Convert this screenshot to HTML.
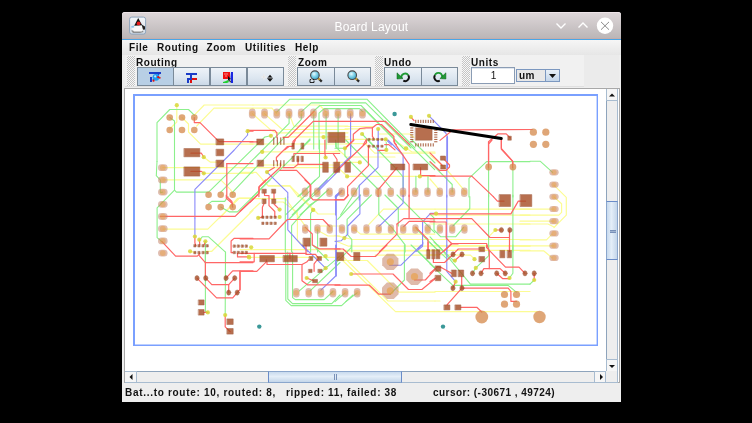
<!DOCTYPE html>
<html><head><meta charset="utf-8">
<style>
*{margin:0;padding:0;box-sizing:border-box}
html,body{width:752px;height:423px;overflow:hidden;background:#000}
body{position:relative;font-family:"Liberation Sans",sans-serif}
.a{position:absolute}
#win{left:122px;top:12px;width:499px;height:390px;background:#eeeeee;border-radius:3px 3px 0 0;will-change:transform}
#title{left:0;top:0;width:499px;height:27px;background:linear-gradient(#ddd6d8,#bab5b6);border-radius:3px 3px 0 0;border-top:1px solid #eee4e8}
#tline{left:0;top:26px;width:499px;height:2px;background:linear-gradient(#c2acac 0 50%,#4aa6e6 50%)}
.tt{color:#fff;font-size:12px;left:212.5px;top:7.5px;letter-spacing:0.2px}
.menu{font-weight:bold;font-size:10px;color:#111;top:30px;letter-spacing:0.55px}
.lbl{font-weight:bold;font-size:10px;color:#111;top:45px;letter-spacing:0.55px}
.grip{width:8px;height:30px;top:44px;background:repeating-conic-gradient(#c4c4c4 0 25%,#f8f8f8 0 50%) 0 0/2px 2px}
.btn{height:19px;top:55px;border:1px solid #7a8a99;background:linear-gradient(#eef3f8,#dce6f0 60%,#cbd9e7)}
.btn.sel{background:#b8cfe5}
.status{font-weight:bold;font-size:10px;color:#111;top:374.5px;letter-spacing:0.55px}
</style></head><body>
<div id="win" class="a">
  <div id="title" class="a"></div>
  <div id="tline" class="a"></div>
  <div class="a tt">Board Layout</div>
  <!-- app icon -->
  <svg class="a" style="left:7px;top:4px" width="18" height="19" viewBox="0 0 18 19">
    <defs><linearGradient id="ig" x1="0" y1="0" x2="0" y2="1"><stop offset="0" stop-color="#f4f7fa"/><stop offset="1" stop-color="#d4dde6"/></linearGradient></defs>
    <rect x="0.6" y="1.1" width="16" height="17" rx="2.2" fill="url(#ig)" stroke="#8ea4bc" stroke-width="1"/>
    <path d="M2 14.5 L13.5 14 L14.5 16 L11 17 L4 17 Z" fill="#7a7a7a" opacity="0.8"/>
    <path d="M4 9.5 L9.5 8.5 L14.5 9.5 L15 13.5 L12.5 15.5 L5 15.5 L3 13 Z" fill="#f8f8f8"/>
    <path d="M9.2 2 L5.2 9.8 L13.2 9.2 Z" fill="#151515"/>
    <path d="M12.5 8.5 L16 10.5 L16 13.5 L14 13.8 L13 10 Z" fill="#222"/>
    <circle cx="9.6" cy="7.4" r="1.9" fill="#e81818"/>
    <path d="M2.2 10.2 L5 9.5 L5.2 11.6 L2.6 11.8 Z" fill="#8cc4ec"/>
  </svg>
  <!-- title buttons -->
  <svg class="a" style="left:430px;top:3px" width="70" height="24" viewBox="0 0 70 24">
    <path d="M4.5 8.5 L9 13 L13.5 8.5" fill="none" stroke="#fff" stroke-width="1.4"/>
    <path d="M26.5 12.5 L31 8 L35.5 12.5" fill="none" stroke="#fff" stroke-width="1.4"/>
    <circle cx="53" cy="10.8" r="8.2" fill="#fff"/>
    <path d="M49 6.9 L57 14.7 M57 6.9 L49 14.7" stroke="#8a8a8a" stroke-width="1"/>
  </svg>

  <!-- menu -->
  <div class="a" style="left:0;top:28px;width:499px;height:15px;background:linear-gradient(#f6f6f6,#e6e6e6)"></div>
  <div class="a menu" style="left:7px">File</div>
  <div class="a menu" style="left:35px">Routing</div>
  <div class="a menu" style="left:84.5px">Zoom</div>
  <div class="a menu" style="left:123px">Utilities</div>
  <div class="a menu" style="left:173px">Help</div>
  <!-- toolbar -->
  <div class="a" style="left:3px;top:43px;width:459px;height:32px;background:#f1f1f1"></div>
  <div class="a" style="left:3px;top:74px;width:494px;height:1px;background:#e0e0e0"></div>
  <div class="a grip" style="left:5px"></div>
  <div class="a lbl" style="left:14px">Routing</div>
  <div class="a btn sel" style="left:15px;width:37px"></div>
  <div class="a btn" style="left:51px;width:37px"></div>
  <div class="a btn" style="left:88px;width:37px"></div>
  <div class="a btn" style="left:125px;width:37px"></div>
  <div class="a grip" style="left:166px"></div>
  <div class="a lbl" style="left:176px">Zoom</div>
  <div class="a btn" style="left:175px;width:38px"></div>
  <div class="a btn" style="left:212px;width:37px"></div>
  <div class="a grip" style="left:253px"></div>
  <div class="a lbl" style="left:262px">Undo</div>
  <div class="a btn" style="left:262px;width:38px"></div>
  <div class="a btn" style="left:299px;width:37px"></div>
  <div class="a grip" style="left:340px"></div>
  <svg class="a" style="left:15px;top:55px" width="450" height="20" viewBox="15 55 450 20">
    <!-- route btn (selected) -->
    <rect x="27" y="60" width="12" height="2" fill="#1a3cc8"/>
    <rect x="28" y="65" width="2" height="5" fill="#1a3cc8"/>
    <path d="M37 62 L31 68" stroke="#1a3cc8" stroke-width="1.6"/>
    <circle cx="34" cy="65.3" r="3.4" fill="#1c9cf0"/>
    <circle cx="33.2" cy="64.4" r="1.1" fill="#bfe6ff"/>
    <circle cx="36.2" cy="65.2" r="1.1" fill="#e01010"/><circle cx="37.8" cy="65.8" r="0.9" fill="#e01010"/><circle cx="31.5" cy="68.7" r="1.1" fill="#e01010"/>
    <!-- btn2 -->
    <rect x="64" y="61" width="11" height="2" fill="#1a3cc8"/>
    <rect x="68" y="61" width="2" height="6" fill="#1a3cc8"/>
    <rect x="65" y="66" width="5" height="2" fill="#1a3cc8"/>
    <rect x="65" y="66" width="2" height="5" fill="#1a3cc8"/>
    <rect x="70" y="66" width="5" height="2" fill="#e01010"/>
    <rect x="68" y="68" width="2" height="3" fill="#e01010"/>
    <!-- btn3 -->
    <rect x="101" y="60" width="7" height="7" fill="#f01010"/>
    <circle cx="103" cy="62" r="0.7" fill="#fbb"/><circle cx="105" cy="62" r="0.7" fill="#fbb"/><circle cx="104" cy="64" r="0.7" fill="#fbb"/>
    <path d="M109 60 L111 60 L111 71 L109 71 L108.5 65 Z" fill="#1a28e0"/>
    <path d="M101 70 L104 69 L106 68 L107 70 L105 71 L101 71 Z" fill="#20d030"/>
    <path d="M106 64 L109 67 L107.5 67.5 L109 70 L108 70.5 L107 68 L106 69 Z" fill="#111"/>
    <!-- btn4 -->
    <path d="M145.6 65.6 L148 62.8 L150.4 65.6 Z M145.6 67 L148 69.8 L150.4 67 Z" fill="#111"/>
    <rect x="145.2" y="65.8" width="5.6" height="1" fill="#333"/>
    <path d="M141.8 62 v5.5 M139.5 65 h5" stroke="#fafafa" stroke-width="1.3"/>
    <path d="M141.8 62 v5.5 M139.5 65 h5" stroke="#c8c8c8" stroke-width="0.4"/>
    <!-- zoom box -->
    <defs><radialGradient id="lens" cx="0.4" cy="0.35" r="0.7"><stop offset="0" stop-color="#e8fbff"/><stop offset="0.5" stop-color="#7ad0e8"/><stop offset="1" stop-color="#3aa0c0"/></radialGradient></defs>
    <line x1="197" y1="67" x2="199.8" y2="69.6" stroke="#2a2a2a" stroke-width="2.3"/>
    <line x1="196" y1="66" x2="197.8" y2="67.7" stroke="#c9a030" stroke-width="2"/>
    <circle cx="192.9" cy="63.2" r="4.3" fill="url(#lens)" stroke="#484848" stroke-width="1.1"/>
    <path d="M188 67.5 h1.2 M190.8 67.5 h1.2 M188 70.5 h4 M188 67.5 v3 M192 68.5 v2" stroke="#111" stroke-width="0.9"/>
    <line x1="234.3" y1="67" x2="237.1" y2="69.6" stroke="#2a2a2a" stroke-width="2.3"/>
    <line x1="233.3" y1="66" x2="235.1" y2="67.7" stroke="#c9a030" stroke-width="2"/>
    <circle cx="230.2" cy="63.2" r="4.3" fill="url(#lens)" stroke="#484848" stroke-width="1.1"/>
    <!-- undo -->
    <path d="M279.4 66.2 A3.8 3.8 0 0 1 286.3 63.3" fill="none" stroke="#1e9a34" stroke-width="1.9"/>
    <path d="M286.3 63.3 A3.8 3.8 0 0 1 281.3 68.7" fill="none" stroke="#111" stroke-width="1.9"/>
    <path d="M275 60.8 L275 67 L281 66.6 Z" fill="#1e9a34" stroke="#0c5a18" stroke-width="0.5"/>
    <!-- redo -->
    <path d="M320 66.2 A3.8 3.8 0 0 0 312.9 63.3" fill="none" stroke="#1e9a34" stroke-width="1.9"/>
    <path d="M312.9 63.3 A3.8 3.8 0 0 0 317.8 68.7" fill="none" stroke="#111" stroke-width="1.9"/>
    <path d="M323.9 60.8 L323.9 67 L317.9 66.6 Z" fill="#1e9a34" stroke="#0c5a18" stroke-width="0.5"/>
    <!-- combo arrow -->
    <path d="M427 62 L433 62 L430 65.5 Z" fill="#111"/>
  </svg>

  <div class="a lbl" style="left:349px">Units</div>
  <div class="a" style="left:462px;top:43px;width:35px;height:32px;background:#ebebeb"></div>
  <div class="a" style="left:349px;top:55px;width:44px;height:17px;background:#fff;border:1px solid #8a9cb4;box-shadow:inset 0 1px 0 #e0e6ee;font-size:10px;text-align:center;line-height:15px;color:#111;padding-left:1px">1</div>
  <div class="a" style="left:394px;top:57px;width:44px;height:13px;background:#e8e8e8;border:1px solid #7c98c0;font-size:10px;font-weight:bold;line-height:11px;padding-left:2px;letter-spacing:0.5px;color:#111">um</div>
  <div class="a" style="left:423px;top:57px;width:15px;height:13px;background:linear-gradient(#e8f0f8,#c4d6ea);border:1px solid #7c98c0"><svg width="13" height="11" style="position:absolute;left:0;top:0"><path d="M3 4 L10 4 L6.5 8 Z" fill="#111"/></svg></div>
  <!-- canvas -->
  <div class="a" style="left:2px;top:76px;width:496px;height:295px;border:1px solid #a8a8a8;background:#fff"></div>
  <!-- v scrollbar -->
  <div class="a" style="left:484px;top:77px;width:12px;height:282px;background:#eeeeee;border-left:1px solid #8ea4bc;border-right:1px solid #a8bcd0"></div>
  <div class="a" style="left:484px;top:77px;width:12px;height:12px;background:#f6f6f6;border:1px solid #a8bcd0;border-top:none"></div>
  <div class="a" style="left:484px;top:347px;width:12px;height:12px;background:#f6f6f6;border:1px solid #a8bcd0;border-bottom:none"></div>
  <svg class="a" style="left:484px;top:77px" width="12" height="282" viewBox="0 0 12 282">
    <path d="M3 7.5 L9 7.5 L6 4.5 Z" fill="#111"/>
    <path d="M3 286.5 L9 286.5 L6 289.5 Z" transform="translate(0,-10.5)" fill="#111"/>
  </svg>
  <div class="a" style="left:484px;top:189px;width:12px;height:59px;background:linear-gradient(to right,#c8daee,#e4eef8 45%,#c4d6ea);border:1px solid #8aa6cc;border-top-color:#6a8cc8;border-bottom-color:#6a8cc8"></div>
  <div class="a" style="left:487.5px;top:217.5px;width:6px;height:3px;border-top:1px solid #7890b8;border-bottom:1px solid #7890b8"></div>
  <div class="a" style="left:487.5px;top:219px;width:6px;height:1px;background:#a0b4d0"></div>
  <!-- h scrollbar -->
  <div class="a" style="left:3px;top:359px;width:481px;height:12px;background:#eeeeee;border-top:1px solid #8ea4bc;border-bottom:1px solid #a8bcd0"></div>
  <div class="a" style="left:3px;top:359px;width:12px;height:12px;background:#f6f6f6;border:1px solid #a8bcd0;border-left:none"></div>
  <div class="a" style="left:472px;top:359px;width:12px;height:12px;background:#f6f6f6;border:1px solid #a8bcd0"></div>
  <div class="a" style="left:483px;top:359px;width:13px;height:12px;background:#eeeeee;border:1px solid #a8bcd0;border-top:none"></div>
  <svg class="a" style="left:3px;top:359px" width="481" height="12" viewBox="0 0 481 12">
    <path d="M7.5 3 L7.5 9 L4.5 6 Z" fill="#111"/>
    <path d="M475 3 L475 9 L478 6 Z" fill="#111"/>
  </svg>
  <div class="a" style="left:146px;top:359px;width:134px;height:12px;background:linear-gradient(#c8daee,#e4eef8 45%,#c4d6ea);border:1px solid #8aa6cc;border-left-color:#6a8cc8;border-right-color:#6a8cc8"></div>
  <div class="a" style="left:211.5px;top:362px;width:3px;height:6px;border-left:1px solid #7890b8;border-right:1px solid #7890b8"></div>
  <div class="a status" style="left:3px;letter-spacing:0.7px">Bat...to route: 10, routed: 8,</div>
  <div class="a status" style="left:164px;letter-spacing:0.68px">ripped: 11, failed: 38</div>
  <div class="a status" style="left:311px;letter-spacing:0.45px">cursor: (-30671 , 49724)</div>
</div>
<!--PCB--><svg class="a" style="left:0;top:0" width="752" height="423" viewBox="0 0 752 423">
<defs><clipPath id="cv"><rect x="125" y="89" width="481" height="282"/></clipPath></defs>
<g clip-path="url(#cv)" fill="none" stroke-linejoin="round" stroke-linecap="round">
<path d="M134 346 V95 H598" stroke="#7aa0ff" stroke-width="2" fill="none" stroke-linecap="butt" stroke-linejoin="miter"/><path d="M597.3 94 V345.3 H133" stroke="#7aa0ff" stroke-width="1.4" fill="none" stroke-linecap="butt" stroke-linejoin="miter"/>
<g stroke="#fcfc94" stroke-width="1.2" opacity="1">
<polyline points="176.8,105.2 176.8,122 169.7,129"/>
<polyline points="182,117.5 188.5,124 188.5,132 200.6,144.2 253,144.2"/>
<polyline points="194.3,115.2 204.2,105 253,105"/>
<polyline points="196.7,126 214,108.2 253,108.2"/>
<polyline points="203.8,157.2 210.2,162.1 219.9,162.1"/>
<polyline points="162.8,167.7 253,167.7"/>
<polyline points="203.8,173.3 253,173.3"/>
<polyline points="162.8,179.8 220.7,179.8 231,190.2 232.7,194.7"/>
<polyline points="219.9,218 237.5,198.3 253,198.3"/>
<polyline points="252.3,113.6 270.7,129.9 276,133"/>
<polyline points="264.4,113.6 282.3,129.5 348,129.5"/>
<polyline points="289.1,113.6 293.9,126.2 348,126.2"/>
<polyline points="276.9,132.8 348,132.8"/>
<polyline points="283,136.9 348,136.9"/>
<polyline points="250,144 348,144"/>
<polyline points="253,105 319.5,105 326,112"/>
<polyline points="253,108.2 272,108.2 276.7,113.6"/>
<polyline points="345,126.5 372.4,126.5"/>
<polyline points="345,128.9 365,128.9"/>
<polyline points="379,134 409.7,134 413.8,137.3"/>
<polyline points="345,139.4 385.7,139.4"/>
<polyline points="262.2,151.9 339.7,151.9"/>
<polyline points="263.6,165 340,165"/>
<polyline points="240,167.6 340,167.6"/>
<polyline points="240,172.3 256.2,172.3 268.3,185.8 289.9,185.8 298,196.6"/>
<polyline points="345.8,143.7 366.5,143.7"/>
<polyline points="335,151.2 340,151.2 346.6,157 395,157"/>
<polyline points="365.6,144.1 374.7,153.2 435,153.2"/>
<polyline points="335,162.4 359.8,162.4"/>
<polyline points="338.3,168.1 345.8,174.8"/>
<polyline points="347.1,176.4 435,176.4"/>
<polyline points="400,144 412,152 435,152"/>
<polyline points="298,195 313.2,209.8"/>
<polyline points="430,154.8 447,170 465,191.2"/>
<polyline points="430,179 439.4,189.9"/>
<polyline points="162.8,229.1 207.8,229.1 239.2,198.2 253,198.2"/>
<polyline points="205,251.3 211.8,251.3 253,210.3"/>
<polyline points="190.1,251.3 194.9,252.6"/>
<polyline points="262.4,180 268.2,185.8 289.7,185.8 310,205.7 318,214 335,214"/>
<polyline points="250,198.6 285.6,198.6 304.8,225.3"/>
<polyline points="274.8,202 283.1,202 297.4,212.5 297.4,240 307,250"/>
<polyline points="250,212.3 260,203"/>
<polyline points="240,249.6 340,249.6"/>
<polyline points="316.4,229.8 328,236 340,236"/>
<polyline points="320,226 340,226"/>
<polyline points="368.7,224.6 383.5,209.2 435,209.2"/>
<polyline points="353.9,228.7 360.6,234.1 435,234.1"/>
<polyline points="335,235.4 352.5,239.5 435,239.5"/>
<polyline points="335,240.8 348.5,246.2 435,246.2"/>
<polyline points="345,250.3 435,250.3"/>
<polyline points="435,209.2 530,209.2"/>
<polyline points="430,215.2 530,215.2"/>
<polyline points="430,224 530,224"/>
<polyline points="435,239.5 530,239.5"/>
<polyline points="435,246.2 530,246.2"/>
<polyline points="495.4,230 490,235.4"/>
<polyline points="553.9,185.1 566.3,197.4 566.3,215.2 554,227.5"/>
<polyline points="520,209.2 554,209.2"/>
<polyline points="554,197 561.6,203.8 561.6,212.4 558.8,215.2 520,215.2"/>
<polyline points="520,221.2 554,221.2"/>
<polyline points="520,224 548,224 554,227"/>
<polyline points="520,239.8 546.5,239.8 552.1,234.1"/>
<polyline points="520,245.9 554,245.9"/>
<polyline points="520,250.8 543.6,250.8 552.1,257.8"/>
<polyline points="249.2,257.4 340,257.4"/>
<polyline points="335,251 435,251"/>
<polyline points="375,255.1 435,255.1"/>
<polyline points="341.7,255.1 388,301 435,301"/>
<polyline points="339,257 395.5,311.6 435,311.6"/>
<polyline points="335,260.5 367.3,260.5 399,292.2 435,292.2"/>
<polyline points="435,301 440,301"/>
<polyline points="430,245.7 530,245.7"/>
<polyline points="430,250.4 530,250.4"/>
<polyline points="430,254.8 450,254.8"/>
<polyline points="435,291.5 530,291.5"/>
<polyline points="453,255.1 470.4,255.1 474.5,259.2"/>
<polyline points="435,311.6 537,311.6"/>
</g>
<g stroke="#8cf08c" stroke-width="1.1" opacity="1">
<polyline points="157,161.5 157,122.6 169.75,109.5 188.5,109.5 194.3,115.2"/>
<polyline points="169.7,117.5 174.5,121 174.5,190.2 176.4,192.1 208.6,192.1 264.9,137 270.9,135.8"/>
<polyline points="157,161.5 156.3,175.7 160.3,180 160.3,192.6 162.8,192.1"/>
<polyline points="174.5,190.2 157.1,207.9 157.1,237.6 162,241.6"/>
<polyline points="220.7,192.1 289.1,123.3 289.1,113.6"/>
<polyline points="232.7,192.1 301.3,119.3 301.3,113.9"/>
<polyline points="276.7,112.2 289.8,99.2 366.9,99.2 415,148"/>
<polyline points="301.2,111.9 311.2,102.9 365.7,102.9 411,148"/>
<polyline points="313.7,111 319.9,105.5 361.1,105.5 404,149"/>
<polyline points="319,149 319,113.1 324,108.6 359.5,108.6 362.8,111.6"/>
<polyline points="313.7,113.9 313.7,149"/>
<polyline points="326.1,113.9 326.1,149"/>
<polyline points="338.1,113.9 338.1,149"/>
<polyline points="310,139 299.7,149.8"/>
<polyline points="362.1,134 372.4,144.8"/>
<polyline points="365,110 398.9,144"/>
<polyline points="252.8,196.6 310.1,140"/>
<polyline points="298,196.6 319.5,176.4 319.5,140"/>
<polyline points="310.1,196.6 339.7,167"/>
<polyline points="335.7,140 335.7,146.7 339.7,150.8"/>
<polyline points="335,148.3 344.9,148.3 344.9,156.1 378.8,190"/>
<polyline points="336.2,143 336.2,148.3"/>
<polyline points="345.8,140 379.7,174.8 390.9,188"/>
<polyline points="368.1,140 395,167.3 403.1,177 403.1,188"/>
<polyline points="386.3,142.5 386.3,149.1"/>
<polyline points="415.9,176.4 415.9,191.9"/>
<polyline points="428,176.4 428,191.9"/>
<polyline points="405,140 434.7,169.6"/>
<polyline points="412,140 435,163"/>
<polyline points="315.3,180 300,195.3"/>
<polyline points="328.6,189.5 300,215"/>
<polyline points="319,190.8 300,207.3"/>
<polyline points="359.6,185 340.6,215"/>
<polyline points="430,162.2 452.2,184.5 452.2,191.9"/>
<polyline points="469,197 469,178.4 486.6,161.6 530,161.6"/>
<polyline points="488.6,167 488.6,197"/>
<polyline points="512.9,167 512.9,197"/>
<polyline points="530,161.3 540.4,161.3 552.6,172.3"/>
<polyline points="208.6,203.9 211.8,201.4 224.7,201.4 228,196.6"/>
<polyline points="220.7,207.1 229.5,211.9 237.5,211.9 253,196.6"/>
<polyline points="199.8,240 202.2,236.8 208.6,236.8 225.5,252.1 225.5,263"/>
<polyline points="205.4,241.6 205.4,263"/>
<polyline points="250,199.9 269.9,180"/>
<polyline points="285.6,214.8 310,190.8"/>
<polyline points="292.2,214.8 310,197.4"/>
<polyline points="285.3,197.7 285.3,252"/>
<polyline points="291.6,252 291.6,225.7 309.8,205 319.5,199"/>
<polyline points="288.7,219.5 303.1,205"/>
<polyline points="310.6,252 310.6,213.3 313.1,210"/>
<polyline points="317.6,229 317.6,252"/>
<polyline points="337.7,219.3 360.6,195"/>
<polyline points="371.4,195 347.1,219.3 347.1,234.1 351.8,239.5 351.8,252"/>
<polyline points="378.8,195 378.8,214.5 391.6,227.3 405.1,244.9 405.1,252"/>
<polyline points="384.9,195 398.3,208.5 398.3,226"/>
<polyline points="397,195 421.3,219.3 434.7,232.7"/>
<polyline points="415.9,228.7 435,247.6"/>
<polyline points="469.8,196.6 469.8,208.5 452.9,226"/>
<polyline points="430,213.9 434,217.9 434,230 440.8,236.8 455.6,236.8 463.7,227.3"/>
<polyline points="430,236.8 443.5,251.6"/>
<polyline points="488.6,195 488.6,252"/>
<polyline points="512.9,195 512.9,252"/>
<polyline points="205.4,252 205.4,311.9 207.8,312.4"/>
<polyline points="225.5,252 225.2,315.1"/>
<polyline points="285.8,252 285.8,300.3 291.2,305.6 341.6,305.6 353,295"/>
<polyline points="287.8,252 287.8,299 292.5,303.6 331.8,303.6 340,295"/>
<polyline points="292.6,252 292.6,297.6 295.3,299.6 324.2,299.6 333,291.5"/>
<polyline points="312.8,245 328.3,260.5"/>
<polyline points="299.3,290.8 340,255.8"/>
<polyline points="310.1,290.8 340,262.5"/>
<polyline points="404.4,245 404.4,280 390.3,294.2"/>
<polyline points="411.1,245 435,267.9"/>
<polyline points="351.2,245 351.2,247.7 335,263.9"/>
<polyline points="335,301.6 345.1,292.8"/>
<polyline points="345.8,301.6 357.2,292.8"/>
<polyline points="418,251 430.8,264"/>
<polyline points="429.2,242 447.8,259.6"/>
<polyline points="434,242 455.2,262.2"/>
<polyline points="438.1,245 470.4,284.1 530,284.1"/>
<polyline points="430,263.9 452.9,285.4 508.2,285.4 516.3,292.2"/>
<polyline points="488.6,245 488.6,255.8 475.8,267.9 472.5,273.3"/>
<polyline points="512.9,245 512.9,273.3 509.5,278"/>
<polyline points="530,284.1 534.2,280"/>
</g>
<g stroke="#8a8afa" stroke-width="1.1" opacity="1">
<polyline points="247.6,131.2 247.6,135 234.3,150 194.9,189.4 194.9,218"/>
<polyline points="350.6,113.9 350.6,149"/>
<polyline points="378.2,129 378.2,149"/>
<polyline points="385.7,139.4 391.5,144.8"/>
<polyline points="429,115.8 445.8,133 447.5,137 447.5,167.6"/>
<polyline points="267,172.1 287.8,192.6 287.8,197"/>
<polyline points="339.7,169.6 318.2,191.2"/>
<polyline points="340,192 335,197"/>
<polyline points="350.7,140 350.7,156.1 335,171.5"/>
<polyline points="378,140 378,167.3 359.2,185.7 359.2,200"/>
<polyline points="388,140 403.1,155 403.1,196.6"/>
<polyline points="341.7,191.9 336,197"/>
<polyline points="327.3,180 317.4,190"/>
<polyline points="342.2,190 335.6,195.7 335.6,215"/>
<polyline points="446.8,137 446.8,197"/>
<polyline points="194.9,218 194.9,236.5"/>
<polyline points="287.8,197 287.8,229.8 307.4,251.6"/>
<polyline points="336.3,195 336.3,252"/>
<polyline points="359.9,195 359.9,213.9 347.8,226 347.8,234.1 341.1,240.8 335,241.5"/>
<polyline points="403.1,195 403.1,203.1 378.8,226.7"/>
<polyline points="435,213.2 430.7,213.2 422.6,222 422.6,246.2 415.9,251.6"/>
<polyline points="446.8,195 446.8,252"/>
<polyline points="302,245 325.6,268.2"/>
<polyline points="335.7,245 335.7,276 320.9,290.1"/>
<polyline points="389.6,265.2 401,265.2 421.3,245"/>
<polyline points="336.3,245 336.3,276"/>
<polyline points="422.8,242 422.8,244.1 418,248.9"/>
<polyline points="446.8,245 446.8,271.3 455.6,281.7"/>
</g>
<g stroke="#ff6666" stroke-width="1.2" opacity="1">
<polyline points="194.3,117.5 194.3,122.6 200,122.6 219,141.7 253,141.7"/>
<polyline points="190.9,153.2 201.4,153.2 203.8,157.2"/>
<polyline points="190.9,171.4 201.4,171.4 203.8,173.3"/>
<polyline points="247.6,131.2 253,131.2"/>
<polyline points="226.8,163.7 253,163.7"/>
<polyline points="226.8,163.7 226.8,196.6 231.9,201.5 232.7,207.1"/>
<polyline points="160.3,216.4 235.1,216.4 253,199"/>
<polyline points="247.6,130.3 274.8,130.3 276.9,132.8 276.9,137.4"/>
<polyline points="314,111.5 288.1,137.4 283.1,137.4"/>
<polyline points="385.6,121.4 313.2,121.4 293,141.5 293,146.5"/>
<polyline points="284.8,149.8 288.9,146.5 293,146.5"/>
<polyline points="250,141.9 257.5,141.9"/>
<polyline points="385.6,121.4 409.7,144.8"/>
<polyline points="372.4,127.8 376.6,124.5 381.5,124.5 393.9,136.5 393.9,141.5 396.4,144.8"/>
<polyline points="372.4,127.8 372.4,136.5 373.7,138.1"/>
<polyline points="345.5,148.4 353.3,140.6 353.3,134.2 360,128.5 366,127.8 372.4,127.8"/>
<polyline points="366.6,139 363.3,144.8"/>
<polyline points="440,140.4 453,129.8 532.3,129.5"/>
<polyline points="488.5,167.6 488.5,141.8 498.1,133.8 506.2,133.8 510.2,137.8"/>
<polyline points="501.3,138.6 501.3,148.3 512.6,161.1 512.6,167.6"/>
<polyline points="411,117.4 414,120.5"/>
<polyline points="276.4,161 276.4,157.5 287.2,146.7 292.6,146 295.3,140"/>
<polyline points="293.9,156 293.9,153.5 339.7,153.5"/>
<polyline points="324.9,140 324.9,153.5 325.6,157.5"/>
<polyline points="333,153.5 337,159.5 337,162"/>
<polyline points="283.1,167.6 293.9,167.6 298,164.3 298,158.9"/>
<polyline points="298,164.3 322.9,164.3"/>
<polyline points="279.8,170.3 296.6,170.3 310.1,184.5 310.1,196.6"/>
<polyline points="267,172.1 274.4,167.6"/>
<polyline points="258.9,196.6 258.9,187.2 280.4,167 280.4,163"/>
<polyline points="264.5,193.2 264.5,195.3 269,195.7 269,205.7 274.8,211.5 274.8,217"/>
<polyline points="274,193.2 274,199"/>
<polyline points="264.1,203.6 262.4,207.3 262.4,217"/>
<polyline points="274,204 279.4,209.4"/>
<polyline points="250,202.4 259.1,193.2 259.1,186.6 265.7,180"/>
<polyline points="366.5,140 366.5,142.5 347.4,160.7 335,173.1"/>
<polyline points="354,140 344.9,148.3"/>
<polyline points="378,150.3 386.3,150.3"/>
<polyline points="384.7,144.6 388.8,144.6 395,149.9"/>
<polyline points="397,167.6 378.1,189.9 378.1,196.6"/>
<polyline points="394.3,140 394.3,142.7 409.1,164.3 409.1,196.6"/>
<polyline points="420.6,167.6 420.6,175.7 435,175.7"/>
<polyline points="305,180 310.8,185.4 310.8,197.4 313.2,199.9 343.9,199.9 347.6,196.1 347.6,186.6 368.4,165.7 368.4,145.8"/>
<polyline points="430,152.8 442,165"/>
<polyline points="444.8,160.2 449.5,165 449.5,167 446.2,170.3 439.4,170.3 430,161.6"/>
<polyline points="430,176.1 471.8,176.1 493.3,196.6"/>
<polyline points="492,140 488.6,144 488.6,164"/>
<polyline points="501.4,140 501.4,149.4 512.9,161.6 512.9,164"/>
<polyline points="226.3,195 226.3,198.2 232.7,203.8"/>
<polyline points="162,241.6 175.6,256.1 197.3,256.1 199.8,253.7"/>
<polyline points="199,255.3 205.4,262.6"/>
<polyline points="194.9,236.5 194.9,243 196,245.7"/>
<polyline points="237.5,253 237.5,256.9 248.8,256.9"/>
<polyline points="233,252.6 231.1,252.6 231.1,241 234,238.4 253,238.4"/>
<polyline points="205.4,262.6 253,262.6"/>
<polyline points="240,211.2 257.5,195"/>
<polyline points="240,238.8 269,238.8 287.4,219.5 323,219.5 329.6,226.5"/>
<polyline points="305.2,227.4 312.3,234 312.3,244.9 319.5,248.9 340,248.9"/>
<polyline points="258.2,217.9 262.9,217.2"/>
<polyline points="335,199.7 344.4,199.7 348.5,195"/>
<polyline points="409.1,195 409.1,218.6"/>
<polyline points="397,224 403.7,218.6 435,218.6"/>
<polyline points="397,224 397,234.1 379.5,251.6"/>
<polyline points="403.7,226.7 409.1,221.3 435,221.3"/>
<polyline points="415.9,227.3 428,239.5 428,250.3"/>
<polyline points="430,213.9 510.9,213.9 518.3,201.1 525.7,201.1"/>
<polyline points="493.3,196.6 497.4,201.1 504.1,201.1"/>
<polyline points="430,218.6 471.8,218.6 490,237.5 509.5,237.5"/>
<polyline points="430,222 446.2,222 446.2,238.1 451.6,243.5 486.6,243.5 489.3,251.6"/>
<polyline points="451.6,243.5 443.5,251.6"/>
<polyline points="509.5,230 509.5,251.6"/>
<polyline points="496,230 501.4,230"/>
<polyline points="205.7,278.1 211.8,284.6 228.7,284.6 234.7,278.1"/>
<polyline points="228.7,284.6 228.7,292.6"/>
<polyline points="197,278.1 216.6,297.9 232.7,297.9 237.2,292.6"/>
<polyline points="226,278.1 232.7,270.9 240,270.9 240,289.4 237.2,292.6"/>
<polyline points="240,270.9 253,270.9"/>
<polyline points="204,312.3 207.8,312.4"/>
<polyline points="205.4,262.1 205.4,278"/>
<polyline points="240,253.4 306,253.4"/>
<polyline points="254.2,253.4 254.2,261.8 240,261.8"/>
<polyline points="240,290.1 240,271.3 256.8,271.3 266.3,261.8 266.3,259.8"/>
<polyline points="267,261.8 267,264.5 302,264.5 306.7,262 308.7,259.8"/>
<polyline points="289.9,253.1 289.9,258.5"/>
<polyline points="306,245 306,254.4 315.5,254.4 318.2,257.8"/>
<polyline points="302,264.5 302,280.7 307.4,284.8 340,284.8"/>
<polyline points="318.2,258.5 314.1,263.9 314.1,271.3"/>
<polyline points="306.7,278 313.5,280.7"/>
<polyline points="335,249 343.1,249 351.2,256.5 375.4,256.5 386.9,245"/>
<polyline points="351.2,274 393,274 408.5,289.5 421.9,289.5 435,278.7"/>
<polyline points="335,285.2 369.4,285.2 378.8,294.2 390.3,294.2"/>
<polyline points="414.5,280 425.3,280 435,269.3"/>
<polyline points="428.1,242 428.1,249.7"/>
<polyline points="433.4,258.8 433.4,262.5 444.6,262.5 458.3,249 479.9,249"/>
<polyline points="439.8,254.2 452,243.9 458,243.9"/>
<polyline points="430,273.3 437.4,266.6 442.1,267.9 451.6,273.3"/>
<polyline points="430,281.4 435.4,278"/>
<polyline points="461.7,254.4 454.9,260.5"/>
<polyline points="486.6,245 486.6,247.7 489.3,250.4 505.5,267.2 519,267.2 525,273.3"/>
<polyline points="489.3,250.4 489.3,268.6 483.9,268.6 481,273.3"/>
<polyline points="489.3,268.6 500.1,268.6 505.2,273.3"/>
<polyline points="496.7,273.3 502.8,278.7 509.5,278.7"/>
<polyline points="461.7,276.7 461.7,288.1"/>
<polyline points="452.9,288.1 455.6,281.7"/>
<polyline points="461.9,288.1 508.2,288.1 510.9,291.5 510.9,301.3 516.5,301.3"/>
<polyline points="461.9,288.1 447,304.9"/>
<polyline points="509.5,245 509.5,250.4"/>
<polyline points="534.2,273.3 534.2,280"/>
<polyline points="225.2,315.4 225.2,326.9 230.3,331.7"/>
<polyline points="460.9,307.3 476.8,307.3 481.8,312"/>
<polyline points="199.3,239.7 199.8,244.6"/>
<polyline points="205.4,241.3 204.2,244.6"/>
</g>
<g fill="#a64c24" stroke="#8a3a18" stroke-width="0.5" opacity="0.8">
<rect x="184.2" y="148.5" width="15.6" height="8.3"/>
<rect x="184.2" y="166.9" width="15.6" height="9.2"/>
<rect x="216.3" y="138.9" width="7.4" height="6"/>
<rect x="216.3" y="149.2" width="7.4" height="6.6"/>
<rect x="216.3" y="160.1" width="7.4" height="6.8"/>
<rect x="273.2" y="137.4" width="1.1" height="7.4" stroke="none" fill="#9a4420"/>
<rect x="276.8" y="137.4" width="1.1" height="7.4" stroke="none" fill="#9a4420"/>
<rect x="280.2" y="137.4" width="1.1" height="7.4" stroke="none" fill="#9a4420"/>
<rect x="283.4" y="137.4" width="1.1" height="7.4" stroke="none" fill="#9a4420"/>
<rect x="257" y="139" width="6.7" height="5.8"/>
<rect x="292.2" y="143.1" width="2.1" height="6"/>
<rect x="301.3" y="143.1" width="2.5" height="6"/>
<rect x="328.2" y="132.4" width="16.8" height="10.1"/>
<rect x="415.6" y="127.8" width="16.5" height="12.4"/>
<rect x="508" y="136.2" width="3.3" height="4"/>
<rect x="441" y="156.3" width="4" height="3.2"/>
<rect x="368.2" y="138.4" width="2" height="2"/>
<rect x="372.5" y="138.4" width="2" height="2"/>
<rect x="376.8" y="138.4" width="2" height="2"/>
<rect x="381.1" y="138.4" width="2" height="2"/>
<rect x="415.2" y="119.8" width="1.1" height="3.2" stroke="none" fill="#9a4420"/>
<rect x="417.7" y="119.8" width="1.1" height="3.2" stroke="none" fill="#9a4420"/>
<rect x="420.2" y="119.8" width="1.1" height="3.2" stroke="none" fill="#9a4420"/>
<rect x="422.7" y="119.8" width="1.1" height="3.2" stroke="none" fill="#9a4420"/>
<rect x="425.2" y="119.8" width="1.1" height="3.2" stroke="none" fill="#9a4420"/>
<rect x="427.7" y="119.8" width="1.1" height="3.2" stroke="none" fill="#9a4420"/>
<rect x="430.2" y="119.8" width="1.1" height="3.2" stroke="none" fill="#9a4420"/>
<rect x="432.7" y="119.8" width="1.1" height="3.2" stroke="none" fill="#9a4420"/>
<rect x="415.2" y="143.3" width="1.1" height="3.2" stroke="none" fill="#9a4420"/>
<rect x="417.7" y="143.3" width="1.1" height="3.2" stroke="none" fill="#9a4420"/>
<rect x="420.2" y="143.3" width="1.1" height="3.2" stroke="none" fill="#9a4420"/>
<rect x="422.7" y="143.3" width="1.1" height="3.2" stroke="none" fill="#9a4420"/>
<rect x="425.2" y="143.3" width="1.1" height="3.2" stroke="none" fill="#9a4420"/>
<rect x="427.7" y="143.3" width="1.1" height="3.2" stroke="none" fill="#9a4420"/>
<rect x="430.2" y="143.3" width="1.1" height="3.2" stroke="none" fill="#9a4420"/>
<rect x="432.7" y="143.3" width="1.1" height="3.2" stroke="none" fill="#9a4420"/>
<rect x="410.2" y="127.4" width="3.2" height="1.1" stroke="none" fill="#9a4420"/>
<rect x="410.2" y="129.7" width="3.2" height="1.1" stroke="none" fill="#9a4420"/>
<rect x="410.2" y="132" width="3.2" height="1.1" stroke="none" fill="#9a4420"/>
<rect x="410.2" y="134.3" width="3.2" height="1.1" stroke="none" fill="#9a4420"/>
<rect x="410.2" y="136.6" width="3.2" height="1.1" stroke="none" fill="#9a4420"/>
<rect x="410.2" y="138.9" width="3.2" height="1.1" stroke="none" fill="#9a4420"/>
<rect x="410.2" y="141.2" width="3.2" height="1.1" stroke="none" fill="#9a4420"/>
<rect x="434.2" y="127.4" width="3.2" height="1.1" stroke="none" fill="#9a4420"/>
<rect x="434.2" y="129.7" width="3.2" height="1.1" stroke="none" fill="#9a4420"/>
<rect x="434.2" y="132" width="3.2" height="1.1" stroke="none" fill="#9a4420"/>
<rect x="434.2" y="134.3" width="3.2" height="1.1" stroke="none" fill="#9a4420"/>
<rect x="434.2" y="136.6" width="3.2" height="1.1" stroke="none" fill="#9a4420"/>
<rect x="434.2" y="138.9" width="3.2" height="1.1" stroke="none" fill="#9a4420"/>
<rect x="434.2" y="141.2" width="3.2" height="1.1" stroke="none" fill="#9a4420"/>
<rect x="257.5" y="160.2" width="6.1" height="6.1"/>
<rect x="273.2" y="160.2" width="1.1" height="6.1" stroke="none" fill="#9a4420"/>
<rect x="276.8" y="160.2" width="1.1" height="6.1" stroke="none" fill="#9a4420"/>
<rect x="280.2" y="160.2" width="1.1" height="6.1" stroke="none" fill="#9a4420"/>
<rect x="283.4" y="160.2" width="1.1" height="6.1" stroke="none" fill="#9a4420"/>
<rect x="292.3" y="156.2" width="2" height="5.4"/>
<rect x="297" y="156.2" width="2" height="5.4"/>
<rect x="301.3" y="156.2" width="2" height="5.4"/>
<rect x="322.9" y="162.2" width="5.4" height="10.1"/>
<rect x="333.7" y="162.2" width="6" height="10.1"/>
<rect x="262.2" y="189.2" width="4.1" height="4"/>
<rect x="271.7" y="189.2" width="4" height="4"/>
<rect x="345.1" y="162.2" width="5.4" height="10.1"/>
<rect x="390.9" y="164" width="13.9" height="5.9"/>
<rect x="413.4" y="164" width="14.3" height="5.9"/>
<rect x="368.2" y="145.2" width="2" height="2"/>
<rect x="372.5" y="145.2" width="2" height="2"/>
<rect x="376.8" y="145.2" width="2" height="2"/>
<rect x="381.1" y="145.2" width="2" height="2"/>
<rect x="440.8" y="156.2" width="4.7" height="4"/>
<rect x="440.8" y="165" width="4.7" height="4"/>
<rect x="194" y="244.6" width="2" height="2.4"/>
<rect x="198.1" y="244.6" width="2" height="2.4"/>
<rect x="202.2" y="244.6" width="2" height="2.4"/>
<rect x="206.3" y="244.6" width="2" height="2.4"/>
<rect x="194" y="251.4" width="2" height="2.4"/>
<rect x="198.1" y="251.4" width="2" height="2.4"/>
<rect x="202.2" y="251.4" width="2" height="2.4"/>
<rect x="206.3" y="251.4" width="2" height="2.4"/>
<rect x="233.4" y="244.9" width="2" height="2.4"/>
<rect x="237.4" y="244.9" width="2" height="2.4"/>
<rect x="241.4" y="244.9" width="2" height="2.4"/>
<rect x="245.4" y="244.9" width="2" height="2.4"/>
<rect x="233.4" y="251.3" width="2" height="2.4"/>
<rect x="237.4" y="251.3" width="2" height="2.4"/>
<rect x="241.4" y="251.3" width="2" height="2.4"/>
<rect x="245.4" y="251.3" width="2" height="2.4"/>
<rect x="262.4" y="199" width="3.7" height="4.6"/>
<rect x="271.9" y="199" width="3.9" height="4.6"/>
<rect x="262" y="216" width="2" height="2.4"/>
<rect x="266.1" y="216" width="2" height="2.4"/>
<rect x="270.2" y="216" width="2" height="2.4"/>
<rect x="274.3" y="216" width="2" height="2.4"/>
<rect x="262" y="222.1" width="2" height="2.4"/>
<rect x="266.1" y="222.1" width="2" height="2.4"/>
<rect x="270.2" y="222.1" width="2" height="2.4"/>
<rect x="274.3" y="222.1" width="2" height="2.4"/>
<rect x="303.3" y="238.1" width="6.8" height="8.1"/>
<rect x="320.2" y="238.1" width="6.7" height="8.1"/>
<rect x="499.4" y="194.6" width="11.2" height="11.9"/>
<rect x="520.3" y="194.6" width="11.5" height="11.9"/>
<rect x="198.6" y="299.9" width="5.5" height="5.1"/>
<rect x="198.6" y="309.5" width="5.5" height="5.6"/>
<rect x="260" y="255.5" width="14.4" height="6.3"/>
<rect x="283.4" y="255.5" width="13.9" height="6.3"/>
<rect x="309.4" y="256.5" width="3.4" height="4"/>
<rect x="317.5" y="256.5" width="4" height="4"/>
<rect x="308.7" y="269.3" width="3.4" height="3.3"/>
<rect x="318.2" y="269.3" width="4" height="3.3"/>
<rect x="312.8" y="279.4" width="4.7" height="3.3"/>
<rect x="337" y="252.4" width="6.8" height="8.1"/>
<rect x="353.9" y="252.4" width="6" height="8.1"/>
<rect x="426.8" y="249.7" width="3.2" height="9.1"/>
<rect x="432.1" y="249.7" width="2.7" height="9.1"/>
<rect x="436.1" y="249.7" width="3.7" height="9.1"/>
<rect x="479.2" y="247" width="5.4" height="4.7"/>
<rect x="479.2" y="256.5" width="5.4" height="5.3"/>
<rect x="500.1" y="250.4" width="4.7" height="7.4"/>
<rect x="507.5" y="250.4" width="4" height="7.4"/>
<rect x="435.4" y="265.9" width="5.4" height="5.4"/>
<rect x="435.4" y="275.3" width="5.4" height="5.4"/>
<rect x="451.6" y="270" width="4.7" height="6.7"/>
<rect x="458.3" y="270" width="5.4" height="6.7"/>
<rect x="227.1" y="318.9" width="6.1" height="5.6"/>
<rect x="227.1" y="328.5" width="6.1" height="5.6"/>
<rect x="444.2" y="304.9" width="5.7" height="5"/>
<rect x="455.2" y="304.9" width="5.7" height="5"/>
<ellipse cx="501.4" cy="230" rx="2.1" ry="2.6"/>
<ellipse cx="509.8" cy="230" rx="2.1" ry="2.6"/>
<ellipse cx="197" cy="278.1" rx="2.1" ry="2.6"/>
<ellipse cx="205.7" cy="278.1" rx="2.1" ry="2.6"/>
<ellipse cx="226" cy="278.1" rx="2.1" ry="2.6"/>
<ellipse cx="234.7" cy="278.1" rx="2.1" ry="2.6"/>
<ellipse cx="228.7" cy="292.6" rx="2.1" ry="2.6"/>
<ellipse cx="237.2" cy="292.6" rx="2.1" ry="2.6"/>
<ellipse cx="453" cy="254.4" rx="2.1" ry="2.6"/>
<ellipse cx="462" cy="254.4" rx="2.1" ry="2.6"/>
<ellipse cx="472.5" cy="273.3" rx="2.1" ry="2.6"/>
<ellipse cx="481" cy="273.3" rx="2.1" ry="2.6"/>
<ellipse cx="496.7" cy="273.3" rx="2.1" ry="2.6"/>
<ellipse cx="505.2" cy="273.3" rx="2.1" ry="2.6"/>
<ellipse cx="525" cy="273.3" rx="2.1" ry="2.6"/>
<ellipse cx="452.9" cy="288.1" rx="2.1" ry="2.6"/>
<ellipse cx="461.9" cy="288.1" rx="2.1" ry="2.6"/>
<ellipse cx="534.2" cy="273.3" rx="2.1" ry="2.6"/>
</g>
<g stroke="none">
<polygon points="398.4,265.2 393.7,269.9 386.9,269.9 382.2,265.2 382.2,258.4 386.9,253.7 393.7,253.7 398.4,258.4" fill="#bf7656" opacity="0.5"/><circle cx="390.3" cy="261.8" r="3.6" fill="#ed9d34" opacity="0.55"/>
<polygon points="422.8,280.1 417.9,285.0 411.1,285.0 406.2,280.1 406.2,273.3 411.1,268.4 417.9,268.4 422.8,273.3" fill="#bf7656" opacity="0.5"/><circle cx="414.5" cy="276.7" r="3.6" fill="#ed9d34" opacity="0.55"/>
<polygon points="398.6,294.2 393.7,299.1 386.9,299.1 382.0,294.2 382.0,287.4 386.9,282.5 393.7,282.5 398.6,287.4" fill="#bf7656" opacity="0.5"/><circle cx="390.3" cy="290.8" r="3.6" fill="#ed9d34" opacity="0.55"/>
<rect x="158.00" y="164.30" width="9.60" height="6.80" rx="3.40" fill="#c48068" opacity="0.52"/>
<circle cx="162.8" cy="167.7" r="2.89" fill="#ec9e3c" opacity="0.45"/>
<rect x="158.00" y="176.50" width="9.60" height="6.80" rx="3.40" fill="#c48068" opacity="0.52"/>
<circle cx="162.8" cy="179.9" r="2.89" fill="#ec9e3c" opacity="0.45"/>
<rect x="158.00" y="188.70" width="9.60" height="6.80" rx="3.40" fill="#c48068" opacity="0.52"/>
<circle cx="162.8" cy="192.1" r="2.89" fill="#ec9e3c" opacity="0.45"/>
<rect x="158.00" y="200.90" width="9.60" height="6.80" rx="3.40" fill="#c48068" opacity="0.52"/>
<circle cx="162.8" cy="204.3" r="2.89" fill="#ec9e3c" opacity="0.45"/>
<rect x="158.00" y="213.10" width="9.60" height="6.80" rx="3.40" fill="#c48068" opacity="0.52"/>
<circle cx="162.8" cy="216.5" r="2.89" fill="#ec9e3c" opacity="0.45"/>
<rect x="158.00" y="225.30" width="9.60" height="6.80" rx="3.40" fill="#c48068" opacity="0.52"/>
<circle cx="162.8" cy="228.7" r="2.89" fill="#ec9e3c" opacity="0.45"/>
<rect x="158.00" y="237.50" width="9.60" height="6.80" rx="3.40" fill="#c48068" opacity="0.52"/>
<circle cx="162.8" cy="240.9" r="2.89" fill="#ec9e3c" opacity="0.45"/>
<rect x="158.00" y="249.70" width="9.60" height="6.80" rx="3.40" fill="#c48068" opacity="0.52"/>
<circle cx="162.8" cy="253.1" r="2.89" fill="#ec9e3c" opacity="0.45"/>
<rect x="248.90" y="108.60" width="6.80" height="10.00" rx="3.40" fill="#c48068" opacity="0.52"/>
<circle cx="252.3" cy="113.6" r="2.89" fill="#ec9e3c" opacity="0.45"/>
<rect x="261.14" y="108.60" width="6.80" height="10.00" rx="3.40" fill="#c48068" opacity="0.52"/>
<circle cx="264.54" cy="113.6" r="2.89" fill="#ec9e3c" opacity="0.45"/>
<rect x="273.38" y="108.60" width="6.80" height="10.00" rx="3.40" fill="#c48068" opacity="0.52"/>
<circle cx="276.78" cy="113.6" r="2.89" fill="#ec9e3c" opacity="0.45"/>
<rect x="285.62" y="108.60" width="6.80" height="10.00" rx="3.40" fill="#c48068" opacity="0.52"/>
<circle cx="289.02" cy="113.6" r="2.89" fill="#ec9e3c" opacity="0.45"/>
<rect x="297.86" y="108.60" width="6.80" height="10.00" rx="3.40" fill="#c48068" opacity="0.52"/>
<circle cx="301.26" cy="113.6" r="2.89" fill="#ec9e3c" opacity="0.45"/>
<rect x="310.10" y="108.60" width="6.80" height="10.00" rx="3.40" fill="#c48068" opacity="0.52"/>
<circle cx="313.5" cy="113.6" r="2.89" fill="#ec9e3c" opacity="0.45"/>
<rect x="322.34" y="108.60" width="6.80" height="10.00" rx="3.40" fill="#c48068" opacity="0.52"/>
<circle cx="325.74" cy="113.6" r="2.89" fill="#ec9e3c" opacity="0.45"/>
<rect x="334.58" y="108.60" width="6.80" height="10.00" rx="3.40" fill="#c48068" opacity="0.52"/>
<circle cx="337.98" cy="113.6" r="2.89" fill="#ec9e3c" opacity="0.45"/>
<rect x="346.82" y="108.60" width="6.80" height="10.00" rx="3.40" fill="#c48068" opacity="0.52"/>
<circle cx="350.22" cy="113.6" r="2.89" fill="#ec9e3c" opacity="0.45"/>
<rect x="359.06" y="108.60" width="6.80" height="10.00" rx="3.40" fill="#c48068" opacity="0.52"/>
<circle cx="362.46" cy="113.6" r="2.89" fill="#ec9e3c" opacity="0.45"/>
<rect x="301.70" y="187.50" width="6.60" height="9.60" rx="3.30" fill="#c48068" opacity="0.52"/>
<circle cx="305" cy="192.3" r="2.80" fill="#ec9e3c" opacity="0.45"/>
<rect x="313.95" y="187.50" width="6.60" height="9.60" rx="3.30" fill="#c48068" opacity="0.52"/>
<circle cx="317.25" cy="192.3" r="2.80" fill="#ec9e3c" opacity="0.45"/>
<rect x="326.20" y="187.50" width="6.60" height="9.60" rx="3.30" fill="#c48068" opacity="0.52"/>
<circle cx="329.5" cy="192.3" r="2.80" fill="#ec9e3c" opacity="0.45"/>
<rect x="338.45" y="187.50" width="6.60" height="9.60" rx="3.30" fill="#c48068" opacity="0.52"/>
<circle cx="341.75" cy="192.3" r="2.80" fill="#ec9e3c" opacity="0.45"/>
<rect x="350.70" y="187.50" width="6.60" height="9.60" rx="3.30" fill="#c48068" opacity="0.52"/>
<circle cx="354" cy="192.3" r="2.80" fill="#ec9e3c" opacity="0.45"/>
<rect x="362.95" y="187.50" width="6.60" height="9.60" rx="3.30" fill="#c48068" opacity="0.52"/>
<circle cx="366.25" cy="192.3" r="2.80" fill="#ec9e3c" opacity="0.45"/>
<rect x="375.20" y="187.50" width="6.60" height="9.60" rx="3.30" fill="#c48068" opacity="0.52"/>
<circle cx="378.5" cy="192.3" r="2.80" fill="#ec9e3c" opacity="0.45"/>
<rect x="387.45" y="187.50" width="6.60" height="9.60" rx="3.30" fill="#c48068" opacity="0.52"/>
<circle cx="390.75" cy="192.3" r="2.80" fill="#ec9e3c" opacity="0.45"/>
<rect x="399.70" y="187.50" width="6.60" height="9.60" rx="3.30" fill="#c48068" opacity="0.52"/>
<circle cx="403" cy="192.3" r="2.80" fill="#ec9e3c" opacity="0.45"/>
<rect x="411.95" y="187.50" width="6.60" height="9.60" rx="3.30" fill="#c48068" opacity="0.52"/>
<circle cx="415.25" cy="192.3" r="2.80" fill="#ec9e3c" opacity="0.45"/>
<rect x="424.20" y="187.50" width="6.60" height="9.60" rx="3.30" fill="#c48068" opacity="0.52"/>
<circle cx="427.5" cy="192.3" r="2.80" fill="#ec9e3c" opacity="0.45"/>
<rect x="436.45" y="187.50" width="6.60" height="9.60" rx="3.30" fill="#c48068" opacity="0.52"/>
<circle cx="439.75" cy="192.3" r="2.80" fill="#ec9e3c" opacity="0.45"/>
<rect x="448.70" y="187.50" width="6.60" height="9.60" rx="3.30" fill="#c48068" opacity="0.52"/>
<circle cx="452" cy="192.3" r="2.80" fill="#ec9e3c" opacity="0.45"/>
<rect x="460.95" y="187.50" width="6.60" height="9.60" rx="3.30" fill="#c48068" opacity="0.52"/>
<circle cx="464.25" cy="192.3" r="2.80" fill="#ec9e3c" opacity="0.45"/>
<rect x="549.30" y="169.20" width="9.40" height="6.20" rx="3.10" fill="#c48068" opacity="0.52"/>
<circle cx="554" cy="172.3" r="2.63" fill="#ec9e3c" opacity="0.45"/>
<rect x="549.30" y="181.43" width="9.40" height="6.20" rx="3.10" fill="#c48068" opacity="0.52"/>
<circle cx="554" cy="184.53" r="2.63" fill="#ec9e3c" opacity="0.45"/>
<rect x="549.30" y="193.66" width="9.40" height="6.20" rx="3.10" fill="#c48068" opacity="0.52"/>
<circle cx="554" cy="196.76" r="2.63" fill="#ec9e3c" opacity="0.45"/>
<rect x="549.30" y="205.89" width="9.40" height="6.20" rx="3.10" fill="#c48068" opacity="0.52"/>
<circle cx="554" cy="208.99" r="2.63" fill="#ec9e3c" opacity="0.45"/>
<rect x="549.30" y="218.12" width="9.40" height="6.20" rx="3.10" fill="#c48068" opacity="0.52"/>
<circle cx="554" cy="221.22" r="2.63" fill="#ec9e3c" opacity="0.45"/>
<rect x="549.30" y="230.35" width="9.40" height="6.20" rx="3.10" fill="#c48068" opacity="0.52"/>
<circle cx="554" cy="233.45" r="2.63" fill="#ec9e3c" opacity="0.45"/>
<rect x="549.30" y="242.58" width="9.40" height="6.20" rx="3.10" fill="#c48068" opacity="0.52"/>
<circle cx="554" cy="245.68" r="2.63" fill="#ec9e3c" opacity="0.45"/>
<rect x="549.30" y="254.81" width="9.40" height="6.20" rx="3.10" fill="#c48068" opacity="0.52"/>
<circle cx="554" cy="257.91" r="2.63" fill="#ec9e3c" opacity="0.45"/>
<rect x="302.00" y="224.30" width="6.40" height="9.40" rx="3.20" fill="#c48068" opacity="0.52"/>
<circle cx="305.2" cy="229" r="2.72" fill="#ec9e3c" opacity="0.45"/>
<rect x="314.25" y="224.30" width="6.40" height="9.40" rx="3.20" fill="#c48068" opacity="0.52"/>
<circle cx="317.45" cy="229" r="2.72" fill="#ec9e3c" opacity="0.45"/>
<rect x="326.50" y="224.30" width="6.40" height="9.40" rx="3.20" fill="#c48068" opacity="0.52"/>
<circle cx="329.7" cy="229" r="2.72" fill="#ec9e3c" opacity="0.45"/>
<rect x="338.75" y="224.30" width="6.40" height="9.40" rx="3.20" fill="#c48068" opacity="0.52"/>
<circle cx="341.95" cy="229" r="2.72" fill="#ec9e3c" opacity="0.45"/>
<rect x="351.00" y="224.30" width="6.40" height="9.40" rx="3.20" fill="#c48068" opacity="0.52"/>
<circle cx="354.2" cy="229" r="2.72" fill="#ec9e3c" opacity="0.45"/>
<rect x="363.25" y="224.30" width="6.40" height="9.40" rx="3.20" fill="#c48068" opacity="0.52"/>
<circle cx="366.45" cy="229" r="2.72" fill="#ec9e3c" opacity="0.45"/>
<rect x="375.50" y="224.30" width="6.40" height="9.40" rx="3.20" fill="#c48068" opacity="0.52"/>
<circle cx="378.7" cy="229" r="2.72" fill="#ec9e3c" opacity="0.45"/>
<rect x="387.75" y="224.30" width="6.40" height="9.40" rx="3.20" fill="#c48068" opacity="0.52"/>
<circle cx="390.95" cy="229" r="2.72" fill="#ec9e3c" opacity="0.45"/>
<rect x="400.00" y="224.30" width="6.40" height="9.40" rx="3.20" fill="#c48068" opacity="0.52"/>
<circle cx="403.2" cy="229" r="2.72" fill="#ec9e3c" opacity="0.45"/>
<rect x="412.25" y="224.30" width="6.40" height="9.40" rx="3.20" fill="#c48068" opacity="0.52"/>
<circle cx="415.45" cy="229" r="2.72" fill="#ec9e3c" opacity="0.45"/>
<rect x="424.50" y="224.30" width="6.40" height="9.40" rx="3.20" fill="#c48068" opacity="0.52"/>
<circle cx="427.7" cy="229" r="2.72" fill="#ec9e3c" opacity="0.45"/>
<rect x="436.75" y="224.30" width="6.40" height="9.40" rx="3.20" fill="#c48068" opacity="0.52"/>
<circle cx="439.95" cy="229" r="2.72" fill="#ec9e3c" opacity="0.45"/>
<rect x="449.00" y="224.30" width="6.40" height="9.40" rx="3.20" fill="#c48068" opacity="0.52"/>
<circle cx="452.2" cy="229" r="2.72" fill="#ec9e3c" opacity="0.45"/>
<rect x="461.25" y="224.30" width="6.40" height="9.40" rx="3.20" fill="#c48068" opacity="0.52"/>
<circle cx="464.45" cy="229" r="2.72" fill="#ec9e3c" opacity="0.45"/>
<rect x="293.00" y="288.00" width="6.60" height="9.60" rx="3.30" fill="#c48068" opacity="0.52"/>
<circle cx="296.3" cy="292.8" r="2.80" fill="#ec9e3c" opacity="0.45"/>
<rect x="305.40" y="288.00" width="6.60" height="9.60" rx="3.30" fill="#c48068" opacity="0.52"/>
<circle cx="308.7" cy="292.8" r="2.80" fill="#ec9e3c" opacity="0.45"/>
<rect x="317.60" y="288.00" width="6.60" height="9.60" rx="3.30" fill="#c48068" opacity="0.52"/>
<circle cx="320.9" cy="292.8" r="2.80" fill="#ec9e3c" opacity="0.45"/>
<rect x="329.70" y="288.00" width="6.60" height="9.60" rx="3.30" fill="#c48068" opacity="0.52"/>
<circle cx="333" cy="292.8" r="2.80" fill="#ec9e3c" opacity="0.45"/>
<rect x="341.80" y="288.00" width="6.60" height="9.60" rx="3.30" fill="#c48068" opacity="0.52"/>
<circle cx="345.1" cy="292.8" r="2.80" fill="#ec9e3c" opacity="0.45"/>
<rect x="353.90" y="288.00" width="6.60" height="9.60" rx="3.30" fill="#c48068" opacity="0.52"/>
<circle cx="357.2" cy="292.8" r="2.80" fill="#ec9e3c" opacity="0.45"/>
<circle cx="169.7" cy="117.5" r="3.3" fill="#d4884a" opacity="0.75"/>
<circle cx="182" cy="117.5" r="3.3" fill="#d4884a" opacity="0.75"/>
<circle cx="194.3" cy="117.5" r="3.3" fill="#d4884a" opacity="0.75"/>
<circle cx="169.7" cy="130" r="3.3" fill="#d4884a" opacity="0.75"/>
<circle cx="182" cy="130" r="3.3" fill="#d4884a" opacity="0.75"/>
<circle cx="194.3" cy="130" r="3.3" fill="#d4884a" opacity="0.75"/>
<circle cx="208.6" cy="194.7" r="3.3" fill="#d4884a" opacity="0.75"/>
<circle cx="220.7" cy="194.7" r="3.3" fill="#d4884a" opacity="0.75"/>
<circle cx="232.7" cy="194.7" r="3.3" fill="#d4884a" opacity="0.75"/>
<circle cx="208.6" cy="207.1" r="3.3" fill="#d4884a" opacity="0.75"/>
<circle cx="220.7" cy="207.1" r="3.3" fill="#d4884a" opacity="0.75"/>
<circle cx="232.7" cy="207.1" r="3.3" fill="#d4884a" opacity="0.75"/>
<circle cx="488.6" cy="167" r="3.4" fill="#d4884a" opacity="0.75"/>
<circle cx="512.9" cy="167" r="3.4" fill="#d4884a" opacity="0.75"/>
<circle cx="533.4" cy="132.2" r="3.6" fill="#d4884a" opacity="0.75"/>
<circle cx="545.8" cy="132.2" r="3.6" fill="#d4884a" opacity="0.75"/>
<circle cx="533.4" cy="144.3" r="3.6" fill="#d4884a" opacity="0.75"/>
<circle cx="545.8" cy="144.3" r="3.6" fill="#d4884a" opacity="0.75"/>
<circle cx="504.5" cy="294.5" r="3.6" fill="#d4884a" opacity="0.75"/>
<circle cx="516.5" cy="294.5" r="3.6" fill="#d4884a" opacity="0.75"/>
<circle cx="504.5" cy="304.2" r="3.6" fill="#d4884a" opacity="0.75"/>
<circle cx="516.5" cy="304.2" r="3.6" fill="#d4884a" opacity="0.75"/>
<circle cx="481.8" cy="317" r="6.4" fill="#d4884a" opacity="0.75"/>
<circle cx="539.5" cy="317" r="6.2" fill="#d4884a" opacity="0.75"/>
</g>
<g fill="#d8d838" stroke="none" opacity="0.85">
<circle cx="176.8" cy="105.2" r="2.1"/>
<circle cx="203.8" cy="157.2" r="2.1"/>
<circle cx="203.8" cy="173.3" r="2.1"/>
<circle cx="247.6" cy="131.2" r="2.1"/>
<circle cx="270.9" cy="135.8" r="2.1"/>
<circle cx="323.5" cy="137.1" r="2.1"/>
<circle cx="378.2" cy="129" r="2.1"/>
<circle cx="362.1" cy="134" r="2.1"/>
<circle cx="385.7" cy="139.4" r="2.1"/>
<circle cx="410.9" cy="116.9" r="2.1"/>
<circle cx="429" cy="115.8" r="2.1"/>
<circle cx="406.1" cy="148.3" r="2.1"/>
<circle cx="262.2" cy="151.9" r="2.1"/>
<circle cx="267" cy="172.1" r="2.1"/>
<circle cx="325.6" cy="157.5" r="2.1"/>
<circle cx="344.9" cy="148.3" r="2.1"/>
<circle cx="359.8" cy="162.4" r="2.1"/>
<circle cx="347.1" cy="176.4" r="2.1"/>
<circle cx="419.9" cy="176.4" r="2.1"/>
<circle cx="405.8" cy="148.8" r="2.1"/>
<circle cx="386.3" cy="149.9" r="2.1"/>
<circle cx="313.2" cy="209.8" r="2.1"/>
<circle cx="194.9" cy="236.5" r="2.1"/>
<circle cx="199.3" cy="239.7" r="2.1"/>
<circle cx="205.4" cy="241.3" r="2.1"/>
<circle cx="190.1" cy="251.3" r="2.1"/>
<circle cx="251.2" cy="247.3" r="2.1"/>
<circle cx="248.8" cy="256.9" r="2.1"/>
<circle cx="279.6" cy="209.6" r="2.1"/>
<circle cx="279.6" cy="217" r="2.1"/>
<circle cx="258.2" cy="217.9" r="2.1"/>
<circle cx="313.1" cy="210" r="2.1"/>
<circle cx="344.4" cy="238.1" r="2.1"/>
<circle cx="436.1" cy="213.6" r="2.1"/>
<circle cx="495.4" cy="230" r="2.1"/>
<circle cx="207.8" cy="312.4" r="2.1"/>
<circle cx="225.2" cy="315.1" r="2.1"/>
<circle cx="249.2" cy="257.4" r="2.1"/>
<circle cx="325.6" cy="256" r="2.1"/>
<circle cx="325.6" cy="268.2" r="2.1"/>
<circle cx="306.7" cy="278" r="2.1"/>
<circle cx="351.2" cy="274" r="2.1"/>
<circle cx="454.9" cy="260.5" r="2.1"/>
<circle cx="474.5" cy="259.2" r="2.1"/>
<circle cx="475.8" cy="267.9" r="2.1"/>
<circle cx="455.6" cy="281.7" r="2.1"/>
<circle cx="509.5" cy="278" r="2.1"/>
<circle cx="534.2" cy="280" r="2.1"/>
</g><g fill="#3a9898" stroke="none">
<circle cx="394.6" cy="114" r="2.2"/>
<circle cx="259.3" cy="326.6" r="2.2"/>
<circle cx="443" cy="326.6" r="2.2"/>
</g>
<g stroke="#000" stroke-width="3" opacity="1">
<polyline points="410.8,124.6 501.3,138.4"/>
</g>
</g></svg><!--/PCB-->
</body></html>
